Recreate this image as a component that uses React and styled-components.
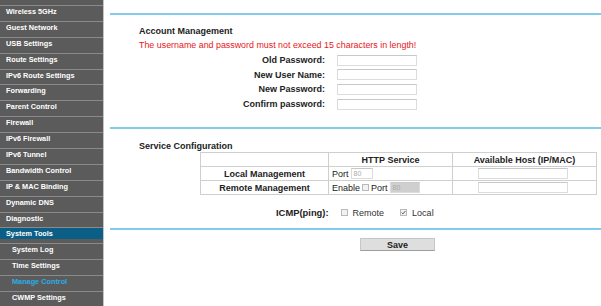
import React from 'react'
import styled, { createGlobalStyle } from 'styled-components'

const GlobalStyle = createGlobalStyle`
  html, body {
    margin: 0;
    padding: 0;
    background: #fff;
    font-family: "Liberation Sans", Arial, sans-serif;
  }
  #root {
    width: 601px;
    height: 306px;
    overflow: hidden;
  }
`

const Page = styled.div`
  display: flex;
  width: 601px;
  height: 306px;
  overflow: hidden;
`

const Sidebar = styled.nav`
  width: 103px;
  flex: none;
  background: #5b5b5b;
  border-right: 1px solid #c4c4c4;
  padding-top: 5px;
  box-sizing: content-box;
`

const MenuItem = styled.div`
  height: 11px;
  line-height: 11px;
  margin-bottom: 3.9px;
  border-top: 1px solid #8a8a8a;
  padding-left: ${p => (p.$sub ? '12px' : '6px')};
  font-size: 7.3px;
  font-weight: 700;
  white-space: nowrap;
  overflow: hidden;
  color: ${p => (p.$current ? '#29aee6' : '#fff')};
  background: ${p => (p.$active ? '#0b5f87' : 'transparent')};
`

const Main = styled.main`
  flex: 1;
  padding-top: 13px;
  padding-left: 6px;
  color: #222;
`

const Rule = styled.div`
  height: 2px;
  margin-top: ${p => p.$top || '0'};
  background: #82cbea;
`

const Heading = styled.div`
  margin: ${p => p.$top} 0 0 29px;
  font-size: 9px;
  line-height: 11px;
  font-weight: 700;
`

const Warning = styled.div`
  margin: 3px 0 0 29px;
  font-size: 8.9px;
  line-height: 11px;
  color: #e8161c;
  white-space: nowrap;
`

const Form = styled.div`
  display: grid;
  grid-template-columns: 215px 80px;
  grid-auto-rows: 14.6px;
  column-gap: 12px;
  align-items: center;
  margin-top: 2.5px;
  margin-bottom: 16px;
`

const Label = styled.div`
  text-align: right;
  font-size: 9px;
  font-weight: 700;
`

const Field = styled.div`
  height: 11px;
  flex: none;
  box-sizing: border-box;
  border: 1px solid #dcdcdc;
  border-top-color: #c8c8c8;
  background: ${p => (p.$disabled ? '#cfcfcf' : '#fff')};
  width: ${p => p.$w || '100%'};
  font-size: 7px;
  line-height: 9px;
  color: #aaa;
  padding-left: 2px;
`

const Table = styled.table`
  margin: 0 0 0 90px;
  width: 397px;
  border-collapse: collapse;
  font-size: 9px;
  table-layout: fixed;

  td, th {
    border: 1px solid #cfcfcf;
    height: 13px;
    padding: 0;
  }
  th {
    font-weight: 700;
    text-align: center;
  }
`

const RowHead = styled.td`
  font-weight: 700;
  text-align: center;
`

const Cell = styled.td`
  padding-left: 3px !important;
`

const Inline = styled.div`
  display: flex;
  align-items: center;
  gap: 2px;
  font-size: 9px;
`

const HostCell = styled.td`
  padding-left: 25px !important;
`

const PingRow = styled.div`
  display: flex;
  align-items: center;
  margin: 12px 0 0 166px;
  font-size: 9px;
  height: 11px;
`

const PingLabel = styled.span`
  font-weight: 700;
  margin-right: 12px;
  font-size: 9.4px;
`

const Option = styled.label`
  display: flex;
  align-items: center;
  gap: 5px;
  margin-right: 16px;
  color: #333;
`

const Box = styled.span`
  display: inline-flex;
  flex: none;
  align-items: center;
  justify-content: center;
  width: 5px;
  height: 5px;
  border: 1px solid #b9b9b9;
  background: #f2f2f2;
`

const SaveBar = styled.div`
  display: flex;
  margin: 8px 0 0 250px;
`

const SaveButton = styled.button`
  width: 75px;
  height: 13px;
  padding: 0;
  border: 1px solid #c6c6c6;
  border-bottom-color: #9d9d9d;
  background: #dedede;
  font-family: inherit;
  font-size: 9px;
  font-weight: 700;
  color: #222;
`

const Check = ({ checked }) => (
  <Box>
    {checked && (
      <svg width="5" height="5" viewBox="0 0 5 5">
        <path d="M0.6 2.6 L1.9 3.9 L4.4 1" fill="none" stroke="#555" strokeWidth="1" />
      </svg>
    )}
  </Box>
)

const menu = [
  { name: 'Wireless 5GHz' },
  { name: 'Guest Network' },
  { name: 'USB Settings' },
  { name: 'Route Settings' },
  { name: 'IPv6 Route Settings' },
  { name: 'Forwarding' },
  { name: 'Parent Control' },
  { name: 'Firewall' },
  { name: 'IPv6 Firewall' },
  { name: 'IPv6 Tunnel' },
  { name: 'Bandwidth Control' },
  { name: 'IP & MAC Binding' },
  { name: 'Dynamic DNS' },
  { name: 'Diagnostic' },
  { name: 'System Tools', active: true },
  { name: 'System Log', sub: true },
  { name: 'Time Settings', sub: true },
  { name: 'Manage Control', sub: true, current: true },
  { name: 'CWMP Settings', sub: true },
]

const accountFields = ['Old Password:', 'New User Name:', 'New Password:', 'Confirm password:']

const App = () => {
  return (
    <Page>
      <GlobalStyle />
      <Sidebar>
        {menu.map(item => (
          <MenuItem key={item.name} $sub={item.sub} $active={item.active} $current={item.current}>
            {item.name}
          </MenuItem>
        ))}
      </Sidebar>
      <Main>
        <Rule />
        <Heading $top="10.5px">Account Management</Heading>
        <Warning>The username and password must not exceed 15 characters in length!</Warning>
        <Form>
          {accountFields.map(label => (
            <React.Fragment key={label}>
              <Label>{label}</Label>
              <Field />
            </React.Fragment>
          ))}
        </Form>
        <Rule />
        <Heading $top="12px">Service Configuration</Heading>
        <Table>
          <colgroup>
            <col width="128" />
            <col width="124" />
            <col />
          </colgroup>
          <thead>
            <tr>
              <th />
              <th>HTTP Service</th>
              <th>Available Host (IP/MAC)</th>
            </tr>
          </thead>
          <tbody>
            <tr>
              <RowHead>Local Management</RowHead>
              <Cell>
                <Inline>Port <Field $w="22px">80</Field></Inline>
              </Cell>
              <HostCell><Field $w="90px" /></HostCell>
            </tr>
            <tr>
              <RowHead>Remote Management</RowHead>
              <Cell>
                <Inline>Enable <Check /> Port <Field $w="30px" $disabled>80</Field></Inline>
              </Cell>
              <HostCell><Field $w="90px" /></HostCell>
            </tr>
          </tbody>
        </Table>
        <PingRow>
          <PingLabel>ICMP(ping):</PingLabel>
          <Option><Check /> Remote</Option>
          <Option><Check checked /> Local</Option>
        </PingRow>
        <Rule $top="10px" />
        <SaveBar>
          <SaveButton>Save</SaveButton>
        </SaveBar>
      </Main>
    </Page>
  )
}

export default App
